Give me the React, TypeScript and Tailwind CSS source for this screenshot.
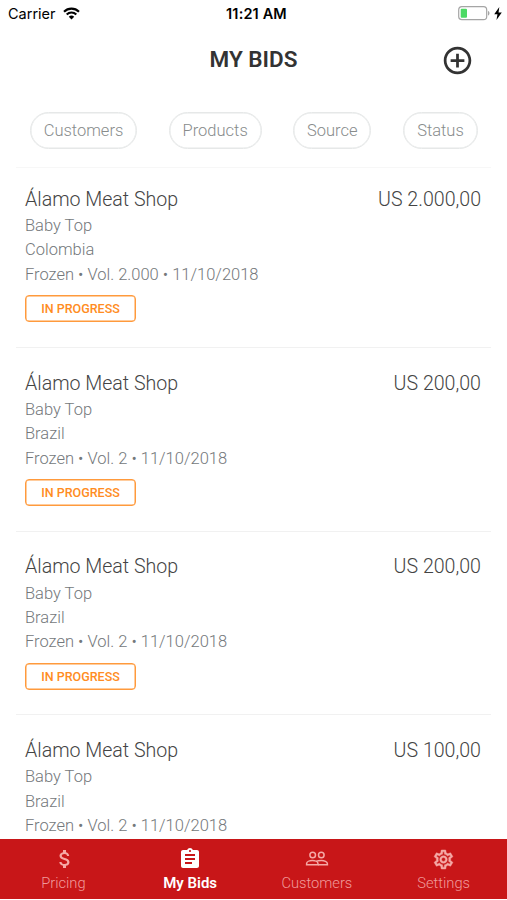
import { ReactNode, useState } from "react";
import {
  MdAddCircleOutline,
  MdAssignment,
  MdAttachMoney,
  MdOutlineSettings,
} from "react-icons/md";

interface IBid {
  id: number;
  customer: string;
  product: string;
  country: string;
  detail: string;
  price: string;
}

const bids: IBid[] = [
  { id: 1, customer: "Álamo Meat Shop", product: "Baby Top", country: "Colombia", detail: "Frozen • Vol. 2.000 • 11/10/2018", price: "US 2.000,00" },
  { id: 2, customer: "Álamo Meat Shop", product: "Baby Top", country: "Brazil", detail: "Frozen • Vol. 2 • 11/10/2018", price: "US 200,00" },
  { id: 3, customer: "Álamo Meat Shop", product: "Baby Top", country: "Brazil", detail: "Frozen • Vol. 2 • 11/10/2018", price: "US 200,00" },
  { id: 4, customer: "Álamo Meat Shop", product: "Baby Top", country: "Brazil", detail: "Frozen • Vol. 2 • 11/10/2018", price: "US 100,00" },
];

const filters = [
  { label: "Customers", width: "w-[107px]" },
  { label: "Products", width: "w-[93px]" },
  { label: "Source", width: "w-[78px]" },
  { label: "Status", width: "w-[75px]" },
];

function PeopleIcon() {
  return (
    <svg width="24" height="24" viewBox="0 0 24 24" fill="none" stroke="currentColor" strokeWidth="1.5">
      <circle cx="7.7" cy="8" r="2.8" />
      <circle cx="16.3" cy="8" r="2.8" />
      <path d="M1.6 17.700v-1c0-1.900 3-3.100 5.700-3.100s5.700 1.200 5.700 3.100v1Z" />
      <path d="M11 14.400c1.300-.6 3.400-.8 5.500-.8 2.700 0 5.900 1.200 5.900 3.100v1H13" />
    </svg>
  );
}

const tabs: { label: string; icon: ReactNode }[] = [
  { label: "Pricing", icon: <MdAttachMoney size={24} className="ml-[3px]" /> },
  { label: "My Bids", icon: <MdAssignment size={24} /> },
  { label: "Customers", icon: <PeopleIcon /> },
  {
    label: "Settings",
    icon: <MdOutlineSettings size={23} className="[&>path]:stroke-[0.4] [&>path[fill=none]]:stroke-none" />,
  },
];

function StatusBar() {
  return (
    <div className="grid h-7 shrink-0 grid-cols-3 items-center pl-2 pr-[5px] font-['Inter',sans-serif] text-[14.5px] text-black">
      <div className="flex items-center gap-[7px]">
        <span>Carrier</span>
        <svg width="17" height="13" viewBox="0 0 17 13" fill="none" stroke="#000" strokeWidth="2.1" className="-mt-0.5">
          <path d="M1 4.700a10.600 10.600 0 0 1 15 0" />
          <path d="M3.700 7.500a6.800 6.800 0 0 1 9.600 0" />
          <path d="M8.500 12.600 5.800 9.800a3.900 3.900 0 0 1 5.400 0Z" fill="#000" stroke="none" />
        </svg>
      </div>
      <span className="whitespace-nowrap pl-[3px] text-center font-semibold tracking-[0.15px]">11:21 AM</span>
      <div className="-mt-0.5 flex items-center justify-end gap-1">
        <svg width="32" height="15" viewBox="0 0 32 15" fill="none">
          <rect x="0.7" y="0.7" width="28" height="13" rx="3.2" stroke="#a5a5a5" strokeWidth="1.2" />
          <rect x="2.7" y="2.7" width="6.3" height="9" rx="1" fill="#4cd964" />
          <path d="M30 5v4.400c.9-.3 1.500-1.100 1.500-2.200S30.900 5.300 30 5Z" fill="#a5a5a5" />
        </svg>
        <svg width="8" height="13" viewBox="0 0 7 12" fill="#000">
          <path d="M4.700 0 0 6.800h3L2.100 12 7 5H4Z" />
        </svg>
      </div>
    </div>
  );
}

function Bid({ bid }: { bid: IBid }) {
  return (
    <li className="mx-4 h-[183.67px] shrink-0 border-b border-[#f1f1f1] px-[9px] pt-[22px] font-light first:h-[180px] first:pt-[18px]">
      <div className="flex h-[27px] items-center justify-between pr-px text-[19.6px] text-[#444]">
        <h2>{bid.customer}</h2>
        <span>{bid.price}</span>
      </div>
      <div className="pt-px text-[16.5px] leading-[24.4px] text-[#74787b]">
        <p>{bid.product}</p>
        <p>{bid.country}</p>
        <p>{bid.detail}</p>
      </div>
      <span className="mt-2 flex h-[27px] w-[111px] items-center justify-center rounded-[4px] border border-[#ff9a3c] pt-px text-[12.5px] font-medium text-[#ff8c22] shadow-[inset_0_0_0_0.5px_#ff9a3c]">
        IN PROGRESS
      </span>
    </li>
  );
}

export default function App() {
  const [tab, setTab] = useState("My Bids");

  return (
    <div className="flex h-[900px] w-[507px] flex-col overflow-hidden bg-white font-['Roboto',sans-serif]">
      <StatusBar />
      <header className="grid h-[64px] shrink-0 grid-cols-[1fr_auto_1fr] items-center">
        <h1 className="col-start-2 text-[22.5px] font-semibold text-[#333]">MY BIDS</h1>
        <button className="mr-[33px] justify-self-end text-[#333]" aria-label="Add">
          <MdAddCircleOutline size={33} />
        </button>
      </header>
      <div className="mx-4 flex h-[76px] shrink-0 items-center justify-between border-b border-[#f7f7f7] pl-[14px] pr-[13px] pt-px">
        {filters.map((item) => (
          <button
            key={item.label}
            className={`h-[37px] rounded-full border border-[#e6e8e8] pt-[2px] text-[16.5px] font-light text-[#888c8c] shadow-[inset_0_0_0_0.5px_#e6e8e8] ${item.width}`}
          >
            {item.label}
          </button>
        ))}
      </div>
      <ul className="flex min-h-0 flex-1 flex-col overflow-hidden">
        {bids.map((bid) => (
          <Bid key={bid.id} bid={bid} />
        ))}
      </ul>
      <nav className="mb-px grid h-[60px] shrink-0 grid-cols-4 bg-[#c81618]">
        {tabs.map((item) => (
          <button
            key={item.label}
            onClick={() => setTab(item.label)}
            className={`flex flex-col items-center pt-[8px] leading-[24px] ${
              tab === item.label ? "text-[15px] font-semibold text-white" : "text-[14.7px] font-light text-[#f09a9a]"
            }`}
          >
            <span className={`flex h-6 items-center ${tab === item.label ? "" : "text-[#f5a9a6]"}`}>{item.icon}</span>
            {item.label}
          </button>
        ))}
      </nav>
    </div>
  );
}
